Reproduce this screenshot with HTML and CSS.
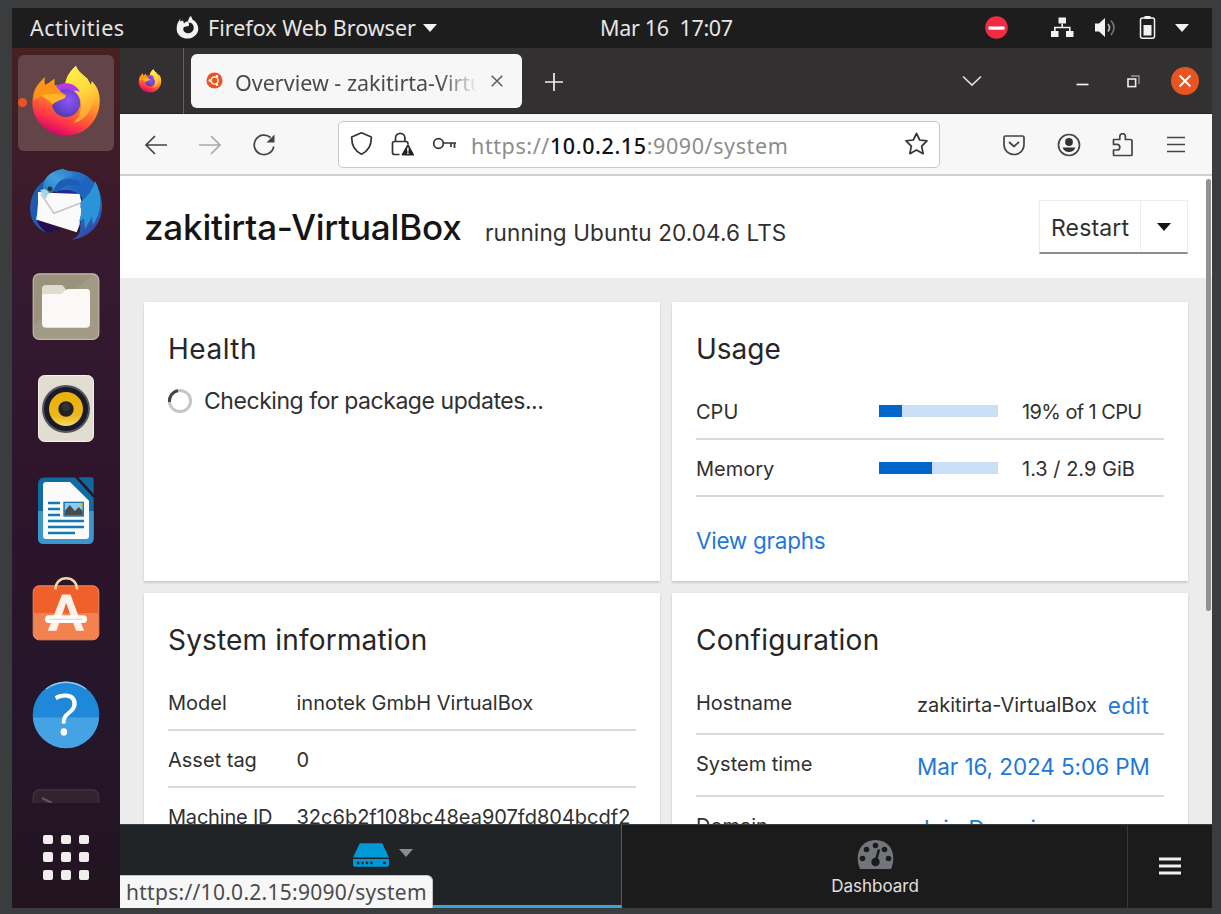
FILE: index.html
```html
<!DOCTYPE html>
<html lang="en">
<head>
<meta charset="utf-8">
<title>Overview - zakitirta-VirtualBox</title>
<link rel="stylesheet" href="styles.css">
</head>
<body>
<div class="screen">
  <header class="topbar">
    <span class="activities">Activities</span>
    <div class="app-menu">
      <svg class="i24" viewBox="0 0 24 24"><path fill="#f2f2f2" d="M4.500 2.500L4 5.500l3-1 1 3c2-2 2-2 4-2 .5-3 1.500-4.500 3-5.500l1.500 3.500c5 3 7 8 5 13-3 6-11 8-17 4C-.5 17 0 10 2.500 5.500z"/><path fill="#1d1d1d" d="M12.500 6.500c4 0 6 3.500 5 7-1.200 4-6.500 5-9.500 2-1-2-1-3 0-4.500l4.500-1c1-1 .5-2 0-3.500z"/></svg>
      <span class="app-name">Firefox Web Browser</span>
      <svg class="caret" viewBox="0 0 14 8"><path fill="#f2f2f2" d="M0 0h14L7 8z"/></svg>
    </div>
    <span class="clock">Mar 16&nbsp; 17:07</span>
    <div class="tray">
      <svg class="i24" viewBox="0 0 24 24"><circle cx="12.500" cy="11.500" r="11.300" fill="#f02c43"/><rect x="4.500" y="10.500" width="16" height="3.200" fill="#fff"/></svg>
      <svg class="i24 net" viewBox="0 0 24 24"><path fill="#f2f2f2" d="M8.500 1.500H16v6H8.500zM1 15h7.500v6H1zM16 15h7.500v6H16z"/><path fill="none" stroke="#f2f2f2" stroke-width="1.600" d="M12.200 7.500v4M4.800 15.500v-4h15v4"/></svg>
      <svg class="i24 vol" viewBox="0 0 24 24"><path fill="#f2f2f2" d="M2 7.500h4l6-5.500v19l-6-5.500H2z"/><path fill="none" stroke="#bbb" stroke-width="1.600" d="M15 8q3 3.500 0 7.500"/><path fill="none" stroke="#777" stroke-width="1.600" d="M18 4.500q6 7 0 14.500"/></svg>
      <svg class="i24 bat" viewBox="0 0 24 24"><path fill="#f2f2f2" d="M9.500 0h6v3h-6zM8.500 9h8v10.500h-8z"/><rect x="5.500" y="2" width="14" height="20.300" rx="2" fill="none" stroke="#f2f2f2" stroke-width="1.500"/></svg>
      <svg class="caret" viewBox="0 0 14 8"><path fill="#f2f2f2" d="M0 0h14L7 8z"/></svg>
    </div>
  </header>
  <div class="desktop">
    <nav class="dock">
      <div class="dock-items">
        <div class="dock-item active">
          <svg viewBox="0 0 96 96">
            <defs>
              <linearGradient id="ffb" x1=".75" y1="0" x2=".35" y2="1"><stop offset="0" stop-color="#fff44f"/><stop offset=".35" stop-color="#ffb52f"/><stop offset=".58" stop-color="#ff752e"/><stop offset=".8" stop-color="#ff3647"/><stop offset="1" stop-color="#d80070"/></linearGradient>
              <radialGradient id="ffp" cx=".6" cy=".4" r=".7"><stop offset="0" stop-color="#8f55f8"/><stop offset=".6" stop-color="#6a43d0"/><stop offset="1" stop-color="#4b3a9c"/></radialGradient>
              <linearGradient id="ffv" x1="0" y1="0" x2="0" y2="1"><stop offset="0" stop-color="#bd38e6"/><stop offset="1" stop-color="#7b4bee"/></linearGradient>
              <linearGradient id="fff" x1=".3" y1="0" x2=".6" y2="1"><stop offset="0" stop-color="#fff04a"/><stop offset=".5" stop-color="#ffd83a"/><stop offset="1" stop-color="#ff9a35"/></linearGradient>
            </defs>
            <g id="firefox">
            <path fill="url(#ffb)" d="M27 22.300C26 25 26 27 27 30L31 28l5.300-4v6.500L47 30c1-9 6-15 11-19 2 6 8 9 11.500 13l3.200 6 1-4c6 6 8 12 8 20 0 20-15 34.500-33.500 34.500S14.300 66 14.300 48c0-7 1.500-13 4.700-17 2-3 5-6 8-8.700z"/>
            <path fill="url(#fff)" d="M47 31c1-9 6-16 11-20 2 6 8 9 11.500 13 6 9 8 18 4 28-4 9-10 14-18 16 8-7 10-20 5-28-3-5-8-7-13.500-9z"/>
            <path fill="url(#ffv)" d="M36 34c4-7 20-9 26 3-3-1.500-5-1.500-7-1 6 4 8 11 7 16L37 46z"/>
            <circle cx="48" cy="48" r="14" fill="url(#ffp)"/>
            <path fill="#ff9516" d="M27 22.300c-1 3-1 6 0 8L31 28l5.300-4v6.500c4 2 5 6 10 8.500 3 1 1 4-1 5-5 2-9 3-11 6-3-3-6-7-10.500-9L16 45c0-9 5-16 11-22.700z"/>
            <path fill="#ffb62b" d="M23.700 41c7-3 15-3 24 0-1 4-8 3-13 8-3-5-7-5-11-8z"/>
            </g>
          </svg>
        </div>
        <div class="dock-item">
          <svg viewBox="0 0 96 96">
            <defs>
              <linearGradient id="tb" x1=".2" y1="0" x2=".8" y2="1"><stop offset="0" stop-color="#2b86d2"/><stop offset=".35" stop-color="#1d62bd"/><stop offset=".7" stop-color="#2468b8"/><stop offset="1" stop-color="#3c3aa0"/></linearGradient>
              <linearGradient id="tbh" x1="1" y1="0" x2="0" y2="1"><stop offset="0" stop-color="#2b79c9"/><stop offset=".5" stop-color="#41a0dc"/><stop offset="1" stop-color="#2678bd"/></linearGradient>
            </defs>
            <path fill="#1c5bb0" d="M30 21C14 30 9 48 14 62c3 7 9 12 16 14l-6-20 4-26z"/>
            <path fill="#24104f" d="M18 60l24 12-12 4c-6-3-10-8-12-16z"/>
            <path fill="url(#tb)" d="M40 14c4-2 8-1 10 0C70 13 84 29 84 49c0 18-11 31-31 34 5-2 8-5 9-9L64 40 34 32z"/>
            <path fill="#27248a" d="M37 36c4-4 18-5 25 3v5l-9-6z"/>
            <path fill="#fafafa" d="M20 35l17 1 24.500 1 2 8-1 5 2 6-2 4-1 8-2.800 7.300L18 62.500l1-5 1-11z"/>
            <path fill="none" stroke="#c4c4c8" stroke-width="1.500" d="M23 37l13 19.300 26-10"/>
            <path fill="#2c93d8" d="M62 46c9-8 13-14 15-22 8 14 7 30-2 44l-1-8-7 12-1-11-5 4c2-6 3-12 1-19z"/>
            <path fill="#1c5cb4" d="M30 34c4-7 12-12 22-12 8 0 10 4 12 8-8-3-18-3-25 5z"/>
            <path fill="url(#tbh)" d="M25 33c-1-12 8-19 19-21 2-1 2 1 4 1.500 4 0 6 2 7 6-8 0-14 4-17 9-2 4-3 7-7 8z"/>
            <path fill="#a3d3e4" d="M22 33l5.500 9L31 35l-4-3z"/>
            <circle cx="32" cy="32" r="2.400" fill="#2c3340"/>
          </svg>
        </div>
        <div class="dock-item">
          <svg viewBox="0 0 96 96">
            <rect x="15.200" y="14.800" width="65.600" height="65.600" rx="6" fill="#a29a84" stroke="#beb8a4" stroke-width="1.200"/>
            <path fill="#968e78" d="M16 22q0-6 6-6h52L16 66z" opacity=".6"/>
            <path fill="#e0dccd" d="M24 30q0-4 4-4h15q2 0 3 2l3 4v8H24z"/>
            <path fill="#faf9f7" d="M24 36.500q0-1.500 2-1.500h17l5-4q1-1 3-1h18q3 0 3 3v32q0 3.700-4 3.700H28q-4 0-4-4z"/>
          </svg>
        </div>
        <div class="dock-item">
          <svg viewBox="0 0 96 96">
            <defs><linearGradient id="spk" x1="0" y1="0" x2="0" y2="1"><stop offset="0" stop-color="#e9b008"/><stop offset=".7" stop-color="#ecb81c"/><stop offset="1" stop-color="#f6da66"/></linearGradient></defs>
            <rect x="20.500" y="14.500" width="55" height="66" rx="6" fill="#e1ddd0" stroke="#f3f1ea"/>
            <circle cx="48" cy="48" r="24" fill="#55565a"/><circle cx="48" cy="48" r="22" fill="#1a1a2b"/>
            <circle cx="48" cy="48" r="17" fill="url(#spk)"/><circle cx="48" cy="48" r="7.700" fill="#222"/><circle cx="48" cy="46" r="4" fill="#333"/>
          </svg>
        </div>
        <div class="dock-item">
          <svg viewBox="0 0 96 96">
            <path fill="#0f6ba3" d="M27 14.500h30L75.700 35v40q0 6-6 6H26q-6 0-6-6V21q0-6.500 7-6.500z"/>
            <path fill="#3b97cb" d="M20 48h55.700v27q0 6-6 6H26q-6 0-6-6z"/>
            <path fill="#12689c" d="M60.300 14.300H73q2.700 0 2.700 2.700v14z"/>
            <path fill="#fbfbfb" d="M28 19h24l19 18.700V73q0 3-3 3H28q-3 0-3-3V22q0-3 3-3z"/>
            <path stroke="#1579b3" stroke-width="2.700" d="M30 40h12M30 46h12M30 52h12M30 58h36M30 64h36M30 70h27"/>
            <rect x="45.300" y="38.700" width="20.700" height="15" fill="#1579b3"/><rect x="46.800" y="40" width="17.700" height="12.500" fill="#8ecaf0"/>
            <path fill="#e9b913" d="M60 40h4.500v5z"/><path fill="#4a4a4a" d="M46.800 52.500V48l5-6 5 6 4-4 3.700 4v4.500z"/>
          </svg>
        </div>
        <div class="dock-item">
          <svg viewBox="0 0 96 96">
            <rect x="15.200" y="20.800" width="65.600" height="54" rx="6" fill="#f0602a" stroke="#f58a5e"/>
            <path fill="#f28350" d="M15.700 48h64.600v21q0 5.300-5 5.300H21q-5.300 0-5.300-5.300z"/>
            <path fill="none" stroke="#f5d8a4" stroke-width="2.600" d="M37.500 24.500c0-15 21.500-15 21.500 0"/>
            <path fill="#fff1ea" d="M44 29.500h8.500L66 65.700h-8L48.200 38l-9.700 27.700h-8.700z"/>
            <rect x="27" y="50.300" width="42" height="7.700" rx="3.800" fill="#fff"/><path stroke="#f6c3b4" d="M31 54.200h34"/>
          </svg>
        </div>
        <div class="dock-item">
          <svg viewBox="0 0 96 96">
            <circle cx="48" cy="47.700" r="33.300" fill="#2088d8"/><path fill="#46a3e3" d="M14.800 50.500h66.400a33.300 33.300 0 0 1-66.400 0z"/>
            <path fill="none" stroke="#8ccdf5" stroke-width="1.300" d="M28 22a33 33 0 0 1 40 0"/>
            <text class="help-mark" x="48" y="67.800" text-anchor="middle">?</text>
          </svg>
        </div>
        <div class="dock-item">
          <svg viewBox="0 0 96 96"><rect x="15.200" y="20.800" width="65.600" height="60" rx="6" fill="#32242f" stroke="#483b46"/><path stroke="#5d525e" stroke-width="2.500" d="M24 29l10 5"/></svg>
        </div>
      </div>
      <div class="apps-grid"><i></i><i></i><i></i><i></i><i></i><i></i><i></i><i></i><i></i></div>
    </nav>
    <main class="window">
      <div class="tabs">
        <div class="pinned"><svg viewBox="13 10 70 72"><use href="#firefox"/></svg></div>
        <div class="tab">
          <svg class="favicon" viewBox="0 0 18 18"><circle cx="9" cy="9" r="8.500" fill="#e95420"/><circle cx="9" cy="9" r="3.800" fill="none" stroke="#fff" stroke-width="1.500"/><circle cx="3.900" cy="9" r="1.300" fill="#fff"/><circle cx="11.600" cy="4.600" r="1.300" fill="#fff"/><circle cx="11.600" cy="13.400" r="1.300" fill="#fff"/></svg>
          <span class="tab-title">Overview - zakitirta-VirtualBox</span>
          <svg class="tab-close" viewBox="0 0 12 12"><path stroke="#5b5b5b" stroke-width="1.500" d="M.7.7l10.600 10.600M11.300.7L.7 11.300"/></svg>
        </div>
        <svg class="plus" viewBox="0 0 18 18"><path stroke="#eee" stroke-width="1.700" d="M9 0v18M0 9h18"/></svg>
        <div class="win-controls">
          <svg width="20" height="12" viewBox="0 0 20 12"><path fill="none" stroke="#ddd" stroke-width="1.700" d="M1 1.500l9 8.500 9-8.500"/></svg>
          <svg class="min" width="13" height="14" viewBox="0 0 13 14"><path stroke="#eee" stroke-width="1.700" d="M.5 10.500h12"/></svg>
          <svg class="restore" width="13" height="13" viewBox="0 0 13 13"><rect x="1" y="4" width="7.600" height="7.600" fill="none" stroke="#eee" stroke-width="1.600"/><path fill="none" stroke="#999" stroke-width="1.300" d="M4 1h8v8"/></svg>
          <svg class="close" width="28" height="28" viewBox="0 0 28 28"><circle cx="14" cy="14" r="14" fill="#e95420"/><path stroke="#fff" stroke-width="1.900" d="M8.500 8.500l11 11M19.500 8.500l-11 11"/></svg>
        </div>
      </div>
      <div class="toolbar">
        <svg class="i24 back" viewBox="0 0 24 24"><path fill="none" stroke="#444" stroke-width="1.700" d="M23 12H2M11 3l-9 9 9 9"/></svg>
        <svg class="i24 forward" viewBox="0 0 24 24"><path fill="none" stroke="#aaa" stroke-width="1.700" d="M1 12h21M13 3l9 9-9 9"/></svg>
        <svg class="i24 reload" viewBox="0 0 24 24"><path fill="none" stroke="#444" stroke-width="1.700" d="M18.500 4.500a9.800 9.800 0 1 0 3.200 9"/><path fill="#444" d="M22.500 1.500v8h-8z"/></svg>
        <div class="urlbar">
          <svg class="i24" viewBox="0 0 24 24"><path fill="none" stroke="#333" stroke-width="1.700" stroke-linejoin="round" d="M12.500 .8l9.800 4.200c.2 7.500-2.600 14-9.800 17.200C5.300 19 2.500 12.500 2.700 5z"/></svg>
          <svg class="i24 lock" viewBox="0 0 24 24"><path fill="none" stroke="#333" stroke-width="1.700" d="M5.500 9.500V6a4.700 4.700 0 0 1 9.400 0V9.500M9.500 22.500H4.500Q2.500 22.500 2.500 20.500V11.500Q2.500 9.500 4.500 9.500h11.500q2 0 2 2.500"/><path fill="#222" stroke="#222" stroke-width="1.500" stroke-linejoin="round" d="M18 13l5.300 9.800H12.300z"/><path stroke="#fff" stroke-width="1.500" d="M17.900 15.500v4M17.900 20.500V22"/></svg>
          <svg class="i24 key" viewBox="0 0 24 24"><circle cx="6.500" cy="11.500" r="4.800" fill="none" stroke="#333" stroke-width="1.700"/><path fill="none" stroke="#333" stroke-width="1.700" d="M11 11h13M22.500 11v5M19 11v4"/></svg>
          <span class="url">https://<b>10.0.2.15</b>:9090/system</span>
          <svg class="i24 star" viewBox="0 0 24 24"><path fill="none" stroke="#333" stroke-width="1.700" stroke-linejoin="round" d="M12.500 1.500l3.200 6.500 7.300.9-5.300 5.200 1.400 7.600-6.600-3.700-6.600 3.700 1.400-7.600L2 8.900 9.300 8z"/></svg>
        </div>
        <svg class="i24 pocket" viewBox="0 0 24 24"><path fill="none" stroke="#444" stroke-width="1.700" d="M3.500 3h17q1.500 0 1.500 1.500V11c0 14-20 14-20 0V4.500Q2 3 3.500 3z"/><path fill="none" stroke="#444" stroke-width="1.700" d="M7 9l5 4.500L17 9"/></svg>
        <svg class="i24 account" viewBox="0 0 24 24"><circle cx="12" cy="12" r="10.500" fill="none" stroke="#444" stroke-width="1.700"/><circle cx="12" cy="9" r="3.900" fill="#333"/><path fill="#333" d="M5.500 14.500h13q-2 4.500-6.500 4.500t-6.500-4.500z"/></svg>
        <svg class="i24 puzzle" viewBox="0 0 24 24"><path fill="none" stroke="#444" stroke-width="1.700" stroke-linejoin="round" d="M3.500 6.500h6.300V3.500a2.800 2.800 0 0 1 5.600 0v3H20.500q1.500 0 1.500 1.500v13.500q0 1-1 1H4.500q-1 0-1-1V17H7a2.600 2.600 0 0 0 0-5.600H3.500z"/></svg>
        <svg class="i24 burger" viewBox="0 0 24 24"><path stroke="#444" stroke-width="1.700" d="M3 4.500h18M3 11.500h18M3 18.500h18"/></svg>
      </div>
      <div class="page">
        <div class="page-header">
          <h1>zakitirta-VirtualBox</h1>
          <span class="os">running Ubuntu 20.04.6 LTS</span>
          <div class="restart"><span class="restart-label">Restart</span><span class="restart-caret"><svg class="caret" viewBox="0 0 14 8"><path fill="#151515" d="M0 0h14L7 8z"/></svg></span></div>
        </div>
        <div class="cards">
          <section class="card">
            <h2 class="t-health">Health</h2>
            <div class="checking"><svg width="26" height="26" viewBox="0 0 26 26"><circle cx="13" cy="13" r="10.600" fill="none" stroke="#c6c6c6" stroke-width="3"/><path fill="none" stroke="#444" stroke-width="3" d="M2.400 14A10.600 10.600 0 0 1 11 2.600"/></svg><span>Checking for package updates...</span></div>
          </section>
          <section class="card">
            <h2 class="t-usage">Usage</h2>
            <div class="row"><span class="label usage-label">CPU</span><span class="bar"><span class="fill" style="width:19%"></span></span><span class="val cpu-val">19% of 1 CPU</span></div>
            <div class="row"><span class="label usage-label">Memory</span><span class="bar"><span class="fill" style="width:44.500%"></span></span><span class="val">1.3 / 2.9 GiB</span></div>
            <a class="link graphs">View graphs</a>
          </section>
          <section class="card">
            <h2 class="t-sys">System information</h2>
            <div class="row"><span class="label sys-label">Model</span><span class="val">innotek GmbH VirtualBox</span></div>
            <div class="row"><span class="label sys-label">Asset tag</span><span class="val">0</span></div>
            <div class="row"><span class="label sys-label t-mid">Machine ID</span><span class="val">32c6b2f108bc48ea907fd804bcdf2</span></div>
          </section>
          <section class="card">
            <h2 class="t-conf">Configuration</h2>
            <div class="row conf"><span class="conf-label">Hostname</span><span>zakitirta-VirtualBox</span><a class="link edit">edit</a></div>
            <div class="row conf time"><span class="conf-label">System time</span><a class="link t-time">Mar 16, 2024 5:06 PM</a></div>
            <div class="row conf"><span class="conf-label">Domain</span><a class="link">Join Domain</a></div>
          </section>
        </div>
        <div class="scrollbar"></div>
      </div>
      <div class="bottom-nav">
        <div class="nav-host">
          <svg class="server" viewBox="0 0 37 24"><path fill="#0099d8" d="M7 0h23l7 14.500H0zM0 16h37v6q0 2-2 2H2q-2 0-2-2z"/><path stroke="#123" stroke-width="2.400" stroke-dasharray="2.400 2.200" d="M4 20.200h17.500"/><path stroke="#123" stroke-width="2.400" d="M31 20.200h2.500"/></svg>
          <svg class="caret" viewBox="0 0 14 8"><path fill="#8b8d8f" d="M0 0h14L7 8z"/></svg>
        </div>
        <div class="nav-dash">
          <svg width="37" height="29" viewBox="0 0 37 29"><path fill="#72767b" d="M3 29C-3 15 3 0 18.500 0S40 15 34 29z"/><g fill="#1b1b1b"><circle cx="18.500" cy="5.500" r="2.800"/><circle cx="9.500" cy="9.500" r="2.800"/><circle cx="27.500" cy="9.500" r="2.800"/><circle cx="5.500" cy="18.500" r="2.800"/><circle cx="31.500" cy="18.500" r="2.800"/><circle cx="18.500" cy="22" r="4.200"/></g><path stroke="#1b1b1b" stroke-width="2.600" d="M18.500 22L22 9.500"/></svg>
          <span>Dashboard</span>
        </div>
        <div class="nav-menu"><svg width="22" height="18" viewBox="0 0 22 18"><path stroke="#f0f0f0" stroke-width="3.200" d="M0 2h22M0 9h22M0 16h22"/></svg></div>
        <div class="status">https://10.0.2.15:9090/system</div>
      </div>
    </main>
  </div>
</div>
</body>
</html>
```
FILE: styles.css
```css
* { box-sizing: border-box; }
body { margin: 0; background: #3b3c3e; width: 1221px; height: 914px; overflow: hidden; font-family: "Noto Sans", "Open Sans", sans-serif; }
svg { display: block; flex: none; }
.i24 { width: 24px; height: 24px; }
.caret { width: 14px; height: 8px; }
.screen { margin: 8px 0 0 12px; width: 1200px; height: 900px; display: flex; flex-direction: column; overflow: hidden; }

.topbar { height: 40px; flex: none; background: #1d1d1d; color: #e6e6e6; display: flex; align-items: center; font-size: 21.5px; white-space: nowrap; line-height: 40px; }
.activities { width: 146px; margin-left: 18px; letter-spacing: .5px; }
.app-menu { display: flex; align-items: center; width: 424px; }
.app-name { margin: 0 8px 0 8px; width: 207px; }
.clock { width: 384px; letter-spacing: -.3px; }
.tray { display: flex; align-items: center; height: 38px; }
.tray .net { margin-left: 42px; }
.tray .vol { margin-left: 19px; }
.tray .bat { margin-left: 18px; }
.tray .caret { margin-left: 16px; }

.desktop { display: flex; height: 860px; }
.dock { width: 108px; flex: none; background: linear-gradient(#472022, #3d1b29 14%, #351930 28%, #2c142b 55%, #25162a 78%, #21141f); }
.dock-items { height: 755px; padding: 7px 6px 0; overflow: hidden; display: flex; flex-direction: column; gap: 6px; }
.dock-item { height: 96px; flex: none; border-radius: 6px; }
.dock-item svg { width: 96px; height: 96px; }
.dock-item.active { background: #634549; position: relative; }
.dock-item.active::before { content: ""; position: absolute; left: 0; top: 43px; width: 9px; height: 9px; border-radius: 50%; background: #e95420; }
.help-mark { font: 56px "Open Sans", sans-serif; fill: #fff; }
.apps-grid { display: grid; grid-template-columns: repeat(3, 9.300px); gap: 8.700px; margin: 31.500px 0 0 31.300px; }
.apps-grid i { height: 9.300px; border-radius: 2px; background: #f0eeec; }

.window { width: 1092px; display: flex; flex-direction: column; }
.tabs { height: 66px; flex: none; background: #333031; display: flex; align-items: center; border-bottom: 1px solid #232323; }
.pinned { width: 64px; height: 66px; border-right: 1px solid #626060; padding: 21px 0 0 18px; }
.pinned svg { width: 24px; height: 24px; }
.tab { margin-left: 7px; width: 331px; height: 54px; border-radius: 6px; background: #f7f7f7; display: flex; align-items: center; padding-left: 15px; }
.favicon { width: 17px; height: 17px; }
.tab-title { margin: 3px 0 0 12px; width: 244px; font-size: 21.500px; color: #4b4b4b; white-space: nowrap; overflow: hidden; -webkit-mask-image: linear-gradient(90deg, #000 205px, transparent 243px); mask-image: linear-gradient(90deg, #000 205px, transparent 243px); }
.tab-close { width: 12px; height: 12px; margin-left: 12px; margin-top: 1px; }
.plus { width: 18px; height: 18px; margin: 3px 0 0 23px; }
.win-controls { margin-left: auto; padding-right: 13px; display: flex; align-items: center; }
.win-controls .min { margin-left: 94px; }
.win-controls .restore { margin: 2px 0 0 38px; }
.win-controls .close { margin: 1px 0 0 31px; }

.toolbar { height: 62px; flex: none; background: #f7f7f7; border-bottom: 2px solid #cfcfcf; display: flex; align-items: center; }
.toolbar > .i24 { margin-top: 2px; }
.toolbar > .back { margin-left: 24px; }
.toolbar > .forward { margin-left: 30px; }
.toolbar > .reload { margin-left: 30px; }
.urlbar { width: 602px; height: 47px; margin-left: 62px; border: 1.500px solid #c8c8c8; border-radius: 5px; background: #fff; display: flex; align-items: center; padding-left: 10px; }
.lock { margin-left: 17px; }
.key { margin-left: 18px; }
.url { margin: 2px 0 0 15px; width: 316px; font-size: 21.500px; letter-spacing: .6px; color: #8c8c8c; white-space: nowrap; }
.url b { font-weight: 500; color: #111; }
.star { margin-left: 117px; }
.toolbar > .pocket { margin-left: 62px; }
.toolbar > .account { margin-left: 31px; }
.toolbar > .puzzle { margin-left: 29px; }
.toolbar > .burger { margin-left: 30px; }

.page { height: 648px; flex: none; overflow: hidden; background: #ececec; font-family: Inter, "Noto Sans", sans-serif; color: #303030; position: relative; }
.page-header { height: 102px; background: #fff; padding: 24px 24px 0 24px; display: flex; align-items: flex-start; white-space: nowrap; }
h1 { margin: 0; width: 341px; font-size: 35px; font-weight: 500; letter-spacing: -.2px; line-height: 55px; color: #151515; }
.os { font-size: 22.500px; line-height: 66px; letter-spacing: .12px; }
.restart { margin-left: auto; width: 149px; height: 54px; display: flex; border: 1px solid #ededed; border-bottom: 2px solid #8b8d8f; font-size: 23px; line-height: 55px; letter-spacing: .15px; }
.restart-label { width: 101px; height: 51px; padding-left: 11px; border-right: 1px solid #ededed; }
.restart-caret { padding: 22px 0 0 16px; }
.cards { padding: 24px; display: grid; grid-template-columns: 516px 516px; grid-template-rows: 279px 300px; gap: 12px; }
.card { background: #fff; padding: 28px 24px 0; box-shadow: 0 2px 2px rgba(0,0,0,.12), 0 0 2px rgba(0,0,0,.06); }
h2 { margin: 0 0 15px; font-size: 28px; font-weight: 400; line-height: 38px; color: #262626; white-space: nowrap; }
.t-health { letter-spacing: .5px; }
.t-sys { letter-spacing: .18px; }
.t-conf { letter-spacing: .25px; }
.checking { display: flex; align-items: center; margin: 19px 0 0 -1px; font-size: 23px; line-height: 28px; gap: 11px; letter-spacing: -.45px; white-space: nowrap; }
.row { display: flex; height: 57px; border-bottom: 2px solid #dadada; font-size: 20px; line-height: 57px; align-items: center; white-space: nowrap; }
.row .label, .row .val { padding-top: 3px; }
.usage-label { width: 183px; }
.sys-label { width: 128.500px; }
.t-mid { letter-spacing: -.2px; }
.cpu-val { letter-spacing: -.6px; }
.bar { width: 119px; height: 12px; margin-right: 24px; margin-top: 1px; background: #cadef5; }
.fill { display: block; height: 12px; background: #0066cc; }
.link { color: #1f78d6; font-size: 22.500px; }
.graphs { display: block; margin-top: 28px; line-height: 31px; letter-spacing: -.27px; }
.conf { height: 61px; align-items: flex-start; line-height: 63px; }
.conf.time { height: 62px; }
.conf-label { width: 221px; line-height: 59px; }
.edit { margin-left: 11px; letter-spacing: .4px; }
.t-time { letter-spacing: -.08px; }
.scrollbar { position: absolute; right: 1px; top: 3px; width: 5px; height: 432px; border-radius: 3px; background: #919191; }

.bottom-nav { height: 84px; flex: none; display: flex; background: #1b1b1b; position: relative; font-family: Inter, "Noto Sans", sans-serif; border-top: 1px solid #3a3d40; }
.nav-host { width: 502px; background: #212427; border-bottom: 3px solid #39a5dc; border-right: 1px solid #5a5d60; display: flex; padding: 18px 0 0 233px; }
.server { width: 36px; height: 24px; }
.nav-host .caret { margin: 6px 0 0 10px; }
.nav-dash { width: 506px; border-right: 1px solid #35383c; display: flex; flex-direction: column; align-items: center; padding: 15px 0 0 1px; color: #e0e0e0; font-size: 17px; line-height: 22px; gap: 6px; }
.nav-menu { padding: 32px 0 0 31px; }
.status { position: absolute; left: 0; bottom: 0; width: 313px; height: 33px; background: #f7f7f7; border-radius: 0 6px 0 0; border-top: 1px solid #c4c4c4; border-right: 1px solid #c4c4c4; padding-left: 6px; font: 21px/33px "Noto Sans", sans-serif; letter-spacing: .28px; color: #4b4b4b; white-space: nowrap; }
```
